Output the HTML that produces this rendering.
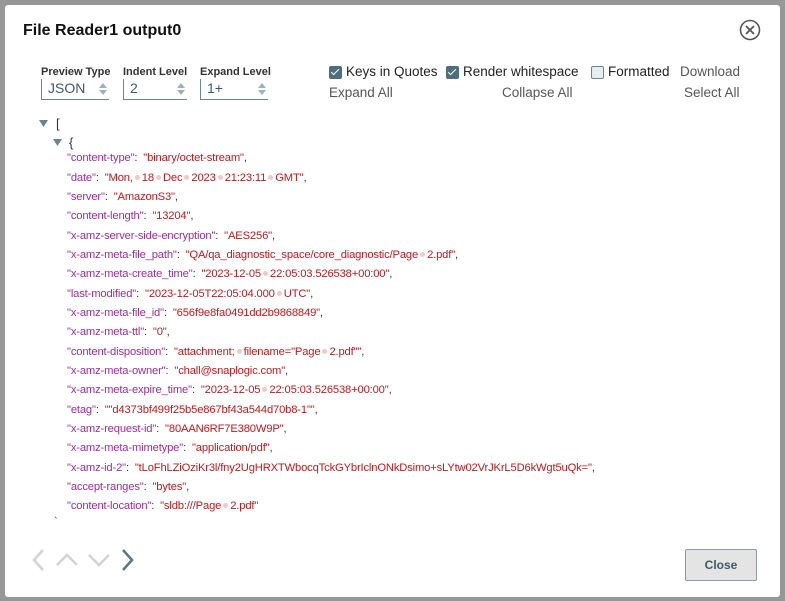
<!DOCTYPE html>
<html><head><meta charset="utf-8"><style>
*{margin:0;padding:0;box-sizing:border-box}
body{width:785px;height:601px;background:#979797;position:relative;overflow:hidden;font-family:"Liberation Sans",sans-serif}
.dlg{position:absolute;left:5px;top:5px;width:775px;height:592px;background:#fff;border-radius:3px}
.t{position:absolute;white-space:nowrap}
.title{left:23px;top:22px;font-size:16px;font-weight:bold;color:#111}
.lbl{font-size:11px;font-weight:bold;color:#333;top:66px}
.sel{position:absolute;top:79px;height:21px;border-left:1px solid #6a8490;border-bottom:1px solid #6a8490;font-size:14px;color:#3e5a66;padding:1px 0 0 6px}
.arr{position:absolute;right:2px;top:3px;width:8px}
.cb{position:absolute;top:66px;width:13px;height:13px;border-radius:2px}
.on{background:#4f6e7b}
.on:after{content:"";position:absolute;left:4px;top:1px;width:3px;height:7px;border:solid #fff;border-width:0 1.6px 1.6px 0;transform:rotate(45deg)}
.off{background:#e6eef1;border:1px solid #6a8490}
.opt{font-size:13.5px;color:#222;top:64px}
.lnk{font-size:13.5px;color:#555;top:85px}
.j{position:absolute;left:67px;font-size:11.2px;white-space:nowrap;letter-spacing:-0.15px}
.k{color:#9b2d99}.v{color:#c0181d}.p{color:#333}
.d{display:inline-block;width:5px;height:5px;border-radius:50%;background:#f0c9c9;margin:0 2px;vertical-align:1px}
.close{position:absolute;left:685px;top:549px;width:72px;height:32px;background:#e4e4e4;border:1px solid #8a9aa2;border-radius:2px;font-size:12px;font-weight:bold;color:#3e5a66;text-align:center;line-height:30px}
</style></head><body>
<div class="dlg"></div>
<div class="t title">File Reader1 output0</div>
<svg style="position:absolute;left:739px;top:19px" width="22" height="22" viewBox="0 0 22 22"><circle cx="11" cy="11" r="9.5" fill="none" stroke="#555" stroke-width="1.6"/><path d="M7 7L15 15M15 7L7 15" stroke="#555" stroke-width="1.8"/></svg>
<div class="t lbl" style="left:41px">Preview Type</div>
<div class="t lbl" style="left:123px">Indent Level</div>
<div class="t lbl" style="left:200px">Expand Level</div>
<div class="sel" style="left:41px;width:68px">JSON<svg class="arr" viewBox="0 0 8 14" height="14"><path d="M0 6L4 1L8 6ZM0 8L4 13L8 8Z" fill="#a0b0b8"/></svg></div>
<div class="sel" style="left:123px;width:64px">2<svg class="arr" viewBox="0 0 8 14" height="14"><path d="M0 6L4 1L8 6ZM0 8L4 13L8 8Z" fill="#a0b0b8"/></svg></div>
<div class="sel" style="left:200px;width:68px">1+<svg class="arr" viewBox="0 0 8 14" height="14"><path d="M0 6L4 1L8 6ZM0 8L4 13L8 8Z" fill="#a0b0b8"/></svg></div>
<div class="cb on" style="left:329px"></div><div class="t opt" style="left:346px">Keys in Quotes</div>
<div class="cb on" style="left:446px"></div><div class="t opt" style="left:463px">Render whitespace</div>
<div class="cb off" style="left:591px"></div><div class="t opt" style="left:608px">Formatted</div>
<div class="t opt" style="left:680px;color:#555">Download</div>
<div class="t lnk" style="left:329px">Expand All</div>
<div class="t lnk" style="left:502px">Collapse All</div>
<div class="t lnk" style="left:684px">Select All</div>
<svg style="position:absolute;left:39px;top:120px" width="9" height="7"><path d="M0 0H9L4.5 7Z" fill="#6a8490"/></svg>
<div class="t" style="left:56px;top:116px;font-size:13px;color:#333">[</div>
<svg style="position:absolute;left:53px;top:139px" width="9" height="7"><path d="M0 0H9L4.5 7Z" fill="#6a8490"/></svg>
<div class="t" style="left:69px;top:135px;font-size:13px;color:#333">{</div>
<div class="j" style="top:152px"><span class="k">"content-type"</span><span class="p">:&nbsp; </span><span class="v">"binary/octet-stream"</span><span class="p">,</span></div>
<div class="j" style="top:172px"><span class="k">"date"</span><span class="p">:&nbsp; </span><span class="v">"Mon,<i class="d"></i>18<i class="d"></i>Dec<i class="d"></i>2023<i class="d"></i>21:23:11<i class="d"></i>GMT"</span><span class="p">,</span></div>
<div class="j" style="top:191px"><span class="k">"server"</span><span class="p">:&nbsp; </span><span class="v">"AmazonS3"</span><span class="p">,</span></div>
<div class="j" style="top:210px"><span class="k">"content-length"</span><span class="p">:&nbsp; </span><span class="v">"13204"</span><span class="p">,</span></div>
<div class="j" style="top:230px"><span class="k">"x-amz-server-side-encryption"</span><span class="p">:&nbsp; </span><span class="v">"AES256"</span><span class="p">,</span></div>
<div class="j" style="top:249px"><span class="k">"x-amz-meta-file_path"</span><span class="p">:&nbsp; </span><span class="v">"QA/qa_diagnostic_space/core_diagnostic/Page<i class="d"></i>2.pdf"</span><span class="p">,</span></div>
<div class="j" style="top:268px"><span class="k">"x-amz-meta-create_time"</span><span class="p">:&nbsp; </span><span class="v">"2023-12-05<i class="d"></i>22:05:03.526538+00:00"</span><span class="p">,</span></div>
<div class="j" style="top:288px"><span class="k">"last-modified"</span><span class="p">:&nbsp; </span><span class="v">"2023-12-05T22:05:04.000<i class="d"></i>UTC"</span><span class="p">,</span></div>
<div class="j" style="top:307px"><span class="k">"x-amz-meta-file_id"</span><span class="p">:&nbsp; </span><span class="v">"656f9e8fa0491dd2b9868849"</span><span class="p">,</span></div>
<div class="j" style="top:326px"><span class="k">"x-amz-meta-ttl"</span><span class="p">:&nbsp; </span><span class="v">"0"</span><span class="p">,</span></div>
<div class="j" style="top:346px"><span class="k">"content-disposition"</span><span class="p">:&nbsp; </span><span class="v">"attachment;<i class="d"></i>filename="Page<i class="d"></i>2.pdf""</span><span class="p">,</span></div>
<div class="j" style="top:365px"><span class="k">"x-amz-meta-owner"</span><span class="p">:&nbsp; </span><span class="v">"chall@snaplogic.com"</span><span class="p">,</span></div>
<div class="j" style="top:384px"><span class="k">"x-amz-meta-expire_time"</span><span class="p">:&nbsp; </span><span class="v">"2023-12-05<i class="d"></i>22:05:03.526538+00:00"</span><span class="p">,</span></div>
<div class="j" style="top:404px"><span class="k">"etag"</span><span class="p">:&nbsp; </span><span class="v">""d4373bf499f25b5e867bf43a544d70b8-1""</span><span class="p">,</span></div>
<div class="j" style="top:423px"><span class="k">"x-amz-request-id"</span><span class="p">:&nbsp; </span><span class="v">"80AAN6RF7E380W9P"</span><span class="p">,</span></div>
<div class="j" style="top:442px"><span class="k">"x-amz-meta-mimetype"</span><span class="p">:&nbsp; </span><span class="v">"application/pdf"</span><span class="p">,</span></div>
<div class="j" style="top:462px"><span class="k">"x-amz-id-2"</span><span class="p">:&nbsp; </span><span class="v">"tLoFhLZiOziKr3l/fny2UgHRXTWbocqTckGYbrIclnONkDsimo+sLYtw02VrJKrL5D6kWgt5uQk="</span><span class="p">,</span></div>
<div class="j" style="top:481px"><span class="k">"accept-ranges"</span><span class="p">:&nbsp; </span><span class="v">"bytes"</span><span class="p">,</span></div>
<div class="j" style="top:500px"><span class="k">"content-location"</span><span class="p">:&nbsp; </span><span class="v">"sldb:///Page<i class="d"></i>2.pdf"</span></div>
<div class="t" style="left:54px;top:516px;font-size:11px;color:#333">`</div>
<svg style="position:absolute;left:28px;top:548px" width="112" height="24" viewBox="0 0 112 24"><g fill="none" stroke-width="2.6"><path d="M15 2L6 12L15 22" stroke="#d4d4d4"/><path d="M29 17L39 7L49 17" stroke="#d4d4d4"/><path d="M61 7L71 17L81 7" stroke="#d4d4d4"/><path d="M95 2L104 12L95 22" stroke="#5a7886"/></g></svg>
<div class="close">Close</div>
</body></html>
